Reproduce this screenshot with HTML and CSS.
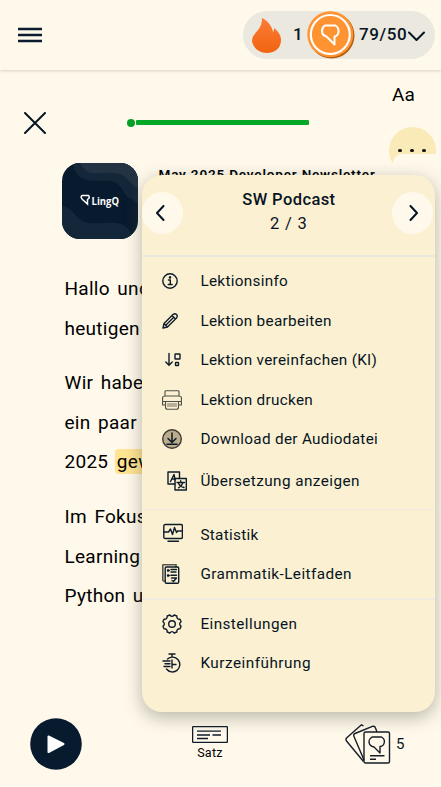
FILE: index.html
```html
<!DOCTYPE html>
<html lang="de">
<head>
<meta charset="utf-8">
<title>Lektion</title>
<link rel="stylesheet" href="styles.css">
</head>
<body>
<header class="topbar">
  <svg class="burger" width="24" height="16" viewBox="0 0 24 16"><path d="M0 2h24M0 8h24M0 14h24"/></svg>
  <div class="stats">
    <svg class="flame" width="30" height="36" viewBox="0 0 30 36"><defs><linearGradient id="fl" x2="0" y2="1"><stop stop-color="#fb7c35"/><stop offset="1" stop-color="#f26411"/></linearGradient></defs><path fill="url(#fl)" d="M10 1C15 3 20 9 21 15C22 14 22 12 22 11C27 15 29 19 29 23C29 31 23 36 15 36C6 36 1 30 0 24C0 19 3 17 6 13C9 9 10 6 10 1Z"/></svg>
    <span class="streak">1</span>
    <svg class="coin" width="48" height="48" viewBox="0 0 48 48"><circle cx="24.5" cy="24.5" r="23" fill="#b65c0c"/><circle cx="23.3" cy="23.3" r="23" fill="#ff9332"/><circle cx="23.3" cy="23.5" r="19.5" fill="none" stroke="#fff" stroke-width="2.2"/><path d="M18 14.5H28.500C33 17.500 32.500 24.500 27.500 25.500V33.5L19.5 25.5C13.5 24 14 17 18 14.5Z" fill="none" stroke="#fff" stroke-width="2" stroke-linejoin="round"/></svg>
    <span class="score">79/50</span>
    <svg class="chev" width="17" height="11" viewBox="0 0 17 11"><path d="M1 1.5l7.5 7.5L16 1.5"/></svg>
  </div>
</header>
<main class="reader">
  <div class="tools">
    <svg class="close" width="22" height="22" viewBox="0 0 22 22"><path d="M1 1l20 20M21 1L1 21"/></svg>
    <div class="progress"><i></i><b></b></div>
    <div class="side">
      <span class="aa">Aa</span>
      <div class="more"><i></i><i></i><i></i><div class="more-cover"></div></div>
    </div>
  </div>
  <div class="lesson">
    <svg class="cover" width="76" height="76" viewBox="0 0 76 76"><defs><clipPath id="cv"><rect width="76" height="76" rx="18"/></clipPath></defs><g clip-path="url(#cv)"><path fill="#081a2d" d="M0 0h76v76H0z"/><path fill="#142639" d="M11 0C14 22 32 17 47 18C62 19 59 33 70 36L76 41V0Z"/><path fill="#233343" d="M18 0C25 15 39 9 52 10C67 11 66 21 76 25V0Z"/><path fill="#142639" d="M0 43C13 44 12 58 27 60C42 62 58 55 67 67L71 76H0Z"/></g><path d="M20 32.500H26.5Q28.500 34.500 25.500 36.500V41L20.5 36.5Q18 34 20 32.500Z" fill="none" stroke="#fff" stroke-width="1.5"/><text x="29.5" y="41.500" class="brand" textLength="27.500" lengthAdjust="spacingAndGlyphs">LingQ</text></svg>
    <h1>May 2025 Developer Newsletter</h1>
  </div>
  <article>
    <p>Hallo und<br>heutigen</p>
    <p>Wir haben<br>ein paar<br>2025 <mark>gew</mark></p>
    <p>Im Fokus<br>Learning<br>Python u</p>
  </article>
</main>
<footer class="player">
  <svg class="play" width="52" height="52" viewBox="0 0 52 52"><circle cx="26" cy="26" r="25.8" fill="#081a2e"/><path d="M18.5 18.5L33.5 26L18.5 34Z" fill="#fff" stroke="#fff" stroke-width="2" stroke-linejoin="round"/></svg>
  <div class="sentence">
    <svg width="36" height="17" viewBox="0 0 36 17" fill="none" stroke="#0d1c2b" stroke-width="1.3"><rect x=".6" y=".6" width="34.8" height="15.8" rx="1"/><path d="M5 5.2h24M5 9h13M20.500 9h8.500M5 12.500h11"/></svg>
    <span>Satz</span>
  </div>
  <div class="cards">
    <svg width="46" height="40" viewBox="0 0 46 40" fill="none" stroke="#151d27" stroke-width="1.4" stroke-linejoin="round"><path d="M18.500 2L16.500 .8L1.500 14Q.5 15.500 1.500 17L18.500 37.500M19 36L9 12.500Q8 10.500 10 9.500L28 2.200Q30 2 30.500 4L32 8"/><rect x="19" y="8" width="25.500" height="31" rx="1.500"/><path d="M27 13H36.500C41 15.500 40 22 35 22.500V29L29 23C22.500 21.500 23 15.500 27 13ZM25 31.800h14.500M25 35.200h6"/></svg>
    <span>5</span>
  </div>
</footer>
<nav class="menu">
  <div class="menu-head">
    <button class="nav prev"><svg width="10" height="16" viewBox="0 0 10 16"><path d="M8.500 1L2 8l6.500 7"/></svg></button>
    <div class="course"><strong>SW Podcast</strong><span>2 / 3</span></div>
    <button class="nav next"><svg width="10" height="16" viewBox="0 0 10 16"><path d="M1.500 1L8 8l-6.500 7"/></svg></button>
  </div>
  <ul class="first">
    <li><svg class="s16" viewBox="0 0 16 16"><circle cx="8" cy="8" r="7.200"/><path d="M6.500 7h1.800v4.500M6.200 11.500h4"/><circle cx="8" cy="4.400" r=".6" fill="#0d1c2b"/></svg><span>Lektionsinfo</span></li>
    <li><svg class="s16" viewBox="0 0 16 16"><path d="M1 15L2 10.500L11 1.500Q13 0 14.500 1.500Q16 3 14.500 5L5.500 14ZM10 2.500l3.500 3.500M2 10.500l3.500 3.500M4 12l7.500-7.500"/></svg><span>Lektion bearbeiten</span></li>
    <li><svg class="s16 sort" viewBox="0 0 16 16"><path d="M4 1.500V13M.8 10L4 13.200L7.200 10"/><rect x="10" y="2" width="5" height="5" rx=".5"/><rect x="10.500" y="10.500" width="3" height="3" rx=".5"/></svg><span>Lektion vereinfachen (KI)</span></li>
    <li><svg class="s20 printer" viewBox="0 0 20 20"><path d="M3 6V1.500Q3 .7 4 .7H16Q17 .7 17 1.500V6M3 6H17Q19.400 6 19.400 8V15H16.500M3.500 15H.6V8Q.6 6 3 6M3.500 11.500h13V17Q16.500 19.300 14.500 19.300h-9Q3.500 19.300 3.500 17ZM.6 11.500h18.800"/><path fill="#b7af9a" stroke="none" d="M5 13h10v4H5z"/></svg><span>Lektion drucken</span></li>
    <li><svg class="s20" viewBox="0 0 20 20"><circle cx="10" cy="10" r="9.300" fill="#bdad8c" stroke="#3d3b35"/><path d="M10 4v9M6 9.500l4 4l4-4M5 15.200h10" stroke-width="1.500"/></svg><span>Download der Audiodatei</span></li>
    <li class="tall"><svg class="s20 translate" viewBox="0 0 20 20"><path d="M8 13H1V1H12.500V7.500M3.500 10.500L7 3.500L8.200 9M4.800 8h3"/><rect x="8" y="7.500" width="11.300" height="11.500"/><path d="M10 11.500h7.500M13.700 9.800v1.700M11.500 16.800Q15 15 16 11.500M11.500 12.500Q13 15.500 17 16.500"/></svg><span class="wide">Übersetzung anzeigen</span></li>
  </ul>
  <ul class="second">
    <li><svg class="s20 stat" viewBox="0 0 20 20"><rect x=".8" y="1.500" width="18.600" height="14" rx="1.300"/><path d="M1 9h4.500l2-3l2 5.500l2-7l2 5l1-1.500h4.500M5 18.200h10.500"/></svg><span>Statistik</span></li>
    <li><svg class="s20" viewBox="0 0 20 20"><path d="M2.800 17H1.500Q.8 17 .8 16V1.500Q.8 .6 1.700 .6H14V3" stroke="#555650" stroke-width="1.600"/><rect x="3.200" y="3" width="13.500" height="16.200" rx="1.200"/><path d="M5.500 6.500h2M5.500 11.500h2M9 5.500h5.500M9 8h5M9 11.200h5.500M9.500 14h4.500M10 16.500l1.500 1l3-3.500M6 5.500v2M6 10.500v2"/></svg><span class="wide">Grammatik-Leitfaden</span></li>
  </ul>
  <ul class="third">
    <li><svg class="s20" viewBox="0 0 20 20"><path d="M7.800 1Q10 3.800 12.200 1L14.800 2Q14.600 5.400 18 5.200L19.100 7.800Q16.200 10 19.100 12.200L18 14.800Q14.600 14.600 14.800 18L12.200 19Q10 16.200 7.800 19L5.200 18Q5.400 14.600 2 14.800L.9 12.200Q3.800 10 .9 7.800L2 5.200Q5.400 5.400 5.200 2Z"/><circle cx="10" cy="10" r="3.300"/></svg><span class="wide">Einstellungen</span></li>
    <li><svg class="s20" viewBox="0 0 20 20"><path d="M7 1h6M10 1v3M5.500 6A7.400 7.400 0 1 1 4.500 16M10 7v8M10 11.500h4M1 8h7M3 10.800h5M2 13.500h6"/></svg><span class="wider">Kurzeinführung</span></li>
  </ul>
</nav>
</body>
</html>
```
FILE: styles.css
```css
* { box-sizing: border-box; }
body { margin: 0; width: 441px; height: 787px; overflow: hidden; position: relative; display: flex; flex-direction: column; background: #fff9eb; color: #061523; font-family: Roboto, "Liberation Sans", sans-serif; }
svg { display: block; flex: none; }

.topbar { height: 70px; flex: none; display: flex; align-items: center; justify-content: space-between; padding: 0 6px 0 18px; box-shadow: 0 1px 3px rgba(60, 60, 40, .2); }
.burger { margin-top: -1px; }
.burger path { stroke: #0c1d31; stroke-width: 2.5; }
.stats { width: 192px; height: 48px; border-radius: 24px; background: #ebe8df; display: flex; align-items: center; padding-left: 9px; font-weight: 500; font-size: 17px; }
.streak { width: 10px; margin-left: 11px; }
.coin { margin-left: 4px; }
.score { margin: -2px 0 0 4px; width: 48px; white-space: nowrap; letter-spacing: .6px; }
.streak { margin-top: -2px; }
.chev { margin: 2px 0 0 1px; }
.chev path, .close path, .nav path { fill: none; stroke: #061523; stroke-width: 2; stroke-linecap: round; stroke-linejoin: round; }

.reader { height: 637px; flex: none; }
.tools { height: 93.500px; display: flex; align-items: flex-start; padding-left: 24px; }
.close { margin-top: 42px; }
.progress { display: flex; align-items: center; gap: 1px; margin: 48px 0 0 81px; height: 9px; width: 182px; }
.progress i { width: 8px; height: 8px; border-radius: 50%; background: #05a02a; }
.progress b { height: 5px; flex: 1; border-radius: 1px; background: #05a826; }
.side { margin-left: 79.500px; width: 47px; padding-top: 13px; }
.aa { display: block; font-size: 19px; line-height: 24px; margin-left: 3.500px; color: #000; }
.more { position: relative; margin-top: 20px; width: 47px; height: 47px; border-radius: 50%; background: #faeab7; display: flex; justify-content: center; gap: 8px; padding-top: 22px; }
.more i { width: 4px; height: 3px; border-radius: 2px; background: #111; }
.more-cover { position: absolute; left: 4px; top: 27px; width: 49px; height: 24px; background: #fff9eb; border-top-left-radius: 9px; }

.lesson { display: flex; padding-left: 62px; gap: 20.500px; height: 105px; }
.cover { margin-top: -.5px; }
.brand { font: 700 11px "Open Sans", sans-serif; fill: #fff; }
.lesson h1 { margin: 1px 0 0; font-size: 13.500px; line-height: 18px; font-weight: 600; white-space: nowrap; letter-spacing: .83px; color: #000; }
article { padding-left: 64.5px; font-size: 19px; line-height: 39.6px; letter-spacing: .28px; word-spacing: 2.5px; color: #000; white-space: nowrap; }
article p { margin: 0 0 15px; position: relative; top: .5px; }
mark { background: #ffe492; color: inherit; padding: 1px 2px; margin-left: -1px; border-radius: 4px; }

.player { height: 80px; display: flex; align-items: center; padding: 0 30px 6px; }
.sentence { margin-left: 110px; width: 36px; display: flex; flex-direction: column; align-items: center; gap: 3px; font-size: 12.500px; line-height: 14px; letter-spacing: .3px; margin-top: -3px; color: #000; }
.cards { margin-left: 117px; display: flex; align-items: center; gap: 5px; font-size: 15px; }

.menu { position: absolute; left: 142.400px; top: 175px; width: 292.500px; height: 536.500px; border-radius: 20px; background: #fcf0d2; box-shadow: 0 5px 18px rgba(70, 75, 60, .4); overflow: hidden; font-size: 15.300px; }
.menu-head { height: 82.400px; border-bottom: 2px solid #ebe8df; display: flex; justify-content: space-between; padding: 17.400px 1.500px 0 0; }
.nav { width: 41px; height: 42px; border: 0; border-radius: 50%; background: #fff9eb; padding: 0; display: flex; align-items: center; justify-content: center; }
.prev { padding-right: 5px; }
.next { padding-left: 2px; }
.course { margin-top: -4px; display: flex; flex-direction: column; align-items: center; line-height: 24px; font-size: 16.500px; padding-left: 2px; }
.course strong { font-weight: 500; letter-spacing: .4px; }
.course span { letter-spacing: .8px; }
ul { list-style: none; margin: 0; }
.first { padding: 4px 0 6px 19.500px; border-bottom: 1px solid #efebe0; }
.second { padding: 5px 0 4px 19.500px; border-bottom: 2px solid #efebe0; }
.third { padding: 4px 0 0 19.500px; }
li { height: 39.500px; display: grid; grid-template-columns: 38.500px 1fr; align-items: center; white-space: nowrap; letter-spacing: .3px; }
li.tall { height: 44px; }
.wide { letter-spacing: .43px; }
.wider { letter-spacing: .5px; }
li svg { fill: none; stroke: #0d1c2b; stroke-width: 1.4; stroke-linejoin: round; stroke-linecap: round; }
.s16 { width: 16px; height: 16px; }
.s20 { width: 20px; height: 20px; }
.sort { margin-left: 3px; }
.translate { margin-left: 5px; }
.stat { margin-left: 1px; margin-top: -3px; }
li .printer { stroke: #4d4e49; stroke-width: 1.1; }
```
